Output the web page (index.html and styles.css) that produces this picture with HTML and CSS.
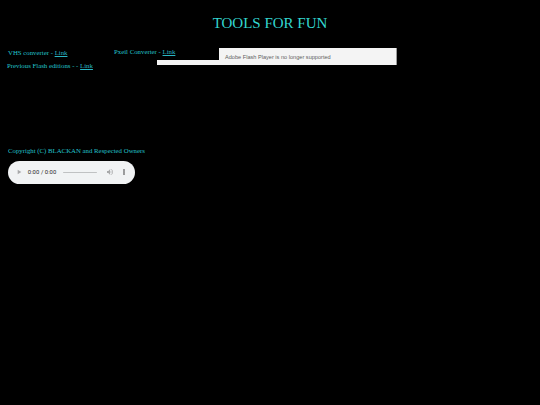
FILE: index.html
```html
<!DOCTYPE html>
<html lang="en">
<head>
  <meta charset="UTF-8" />
  <title>Tools For Fun</title>
  <link rel="stylesheet" href="styles.css">
</head>
<body>
  <h1 class="title">TOOLS FOR FUN</h1>

  <div class="tools">
    <div class="row first">
      <span class="tool vhs">VHS converter - <a href="#">Link</a></span>
      <span class="tool pxeil">Pxeil Converter - <a href="#">Link</a></span>
    </div>
    <div class="row">
      <span class="tool prev">Previous Flash editions - - <a href="#">Link</a></span>
    </div>

    <div class="flash">
      <span class="flash-msg">Adobe Flash Player is no longer supported</span>
    </div>
    <div class="flash-mask"></div>
  </div>

  <p class="copy">Copyright (C) BLACKAN and Respected Owners</p>
  <audio class="player" controls></audio>
</body>
</html>
```

FILE: styles.css
```css
* { box-sizing: border-box; }
body {
  margin: 0;
  background: #000;
  color: #22c3cc;
  font-family: 'Liberation Serif', 'Times New Roman', serif;
  font-size: 6.8px;
  min-height: 100vh;
}
a { color: #2ab6c4; }
.title {
  margin: 15px 0 0;
  text-align: center;
  font-size: 15px;
  font-weight: normal;
  color: #33d6d0;
  line-height: 17px;
}
.tools {
  position: relative;
  margin-top: 17px;
  padding-left: 8px;
}
.row {
  display: flex;
  line-height: 8px;
}
.row.first { margin-bottom: 5px; }
.tool { position: relative; z-index: 2; }
.vhs { width: 106px; }
.pxeil { position: relative; top: -1px; }
.prev { margin-left: -1px; }
.flash {
  position: absolute;
  left: 157px;
  top: -1px;
  width: 240px;
  height: 17px;
  background: #f4f4f4;
  border-right: 1px solid #9a9a9a;
  font-family: 'Liberation Sans', Arial, sans-serif;
  font-size: 5.6px;
  color: #5f5f5f;
  display: flex;
  align-items: center;
  padding-left: 68px;
  z-index: 0;
}
.flash-mask {
  position: absolute;
  left: 143px;
  top: -1px;
  width: 76px;
  height: 12px;
  background: #000;
  z-index: 1;
}
.copy {
  margin: 77px 0 0 8px;
  line-height: 8px;
}
.player {
  display: block;
  margin: 14px 0 0 19px;
  zoom: 0.423;
}
```
